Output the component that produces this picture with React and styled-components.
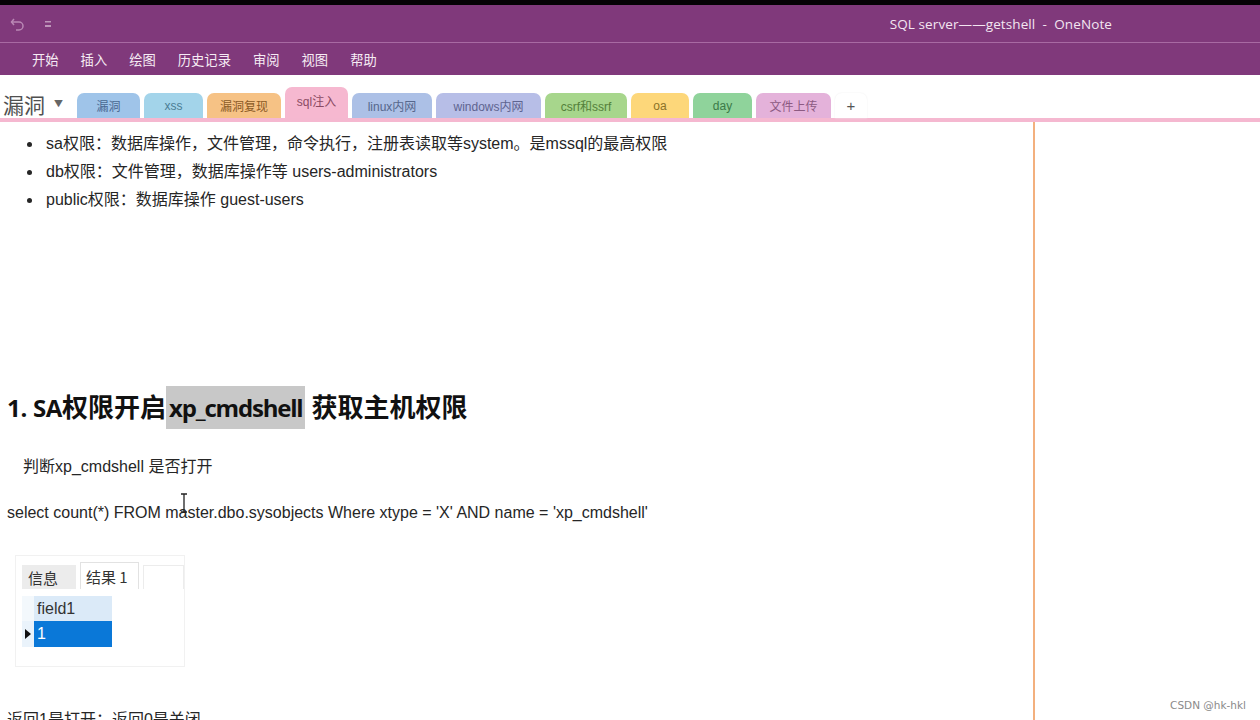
import React from 'react'
import styled, { createGlobalStyle } from 'styled-components'

const GlobalStyle = createGlobalStyle`
  html, body { margin: 0; padding: 0; background: #fff; }
  body { font-family: "Liberation Sans", "Noto Sans CJK SC", sans-serif; }
  #root { width: 1260px; height: 720px; overflow: hidden; }
`

const purple = '#80397b'

const Window = styled.div`
  width: 1260px;
  height: 720px;
  display: flex;
  flex-direction: column;
  overflow: hidden;
  position: relative;
  background: #fff;
`
const TopStrip = styled.div`
  flex-shrink: 0;
  height: 5px;
  background: #050205;
`
const TitleBar = styled.div`
  flex-shrink: 0;
  height: 37px;
  background: ${purple};
  display: flex;
  align-items: center;
  padding-left: 10px;
  box-sizing: border-box;
`
const QuickIcon = styled.span`
  display: flex;
  align-items: center;
  width: 16px;
  height: 16px;
  margin-right: 18px;
  opacity: 0.55;
`
const Title = styled.div`
  margin-left: auto;
  margin-right: 148px;
  color: #f3e6f1;
  font-family: "Open Sans", "Noto Sans CJK SC", sans-serif;
  font-size: 13.5px;
  letter-spacing: 0.1px;
`
const Ribbon = styled.div`
  flex-shrink: 0;
  height: 33px;
  background: ${purple};
  border-top: 1px solid #a86aa3;
  display: flex;
  align-items: center;
  gap: 22px;
  padding-left: 32px;
  box-sizing: border-box;
`
const RibbonItem = styled.span`
  color: #f6ecf4;
  font-family: "Noto Sans CJK SC", sans-serif;
  font-size: 13.3px;
`
const SectionBar = styled.div`
  flex-shrink: 0;
  height: 43px;
  display: flex;
  align-items: flex-end;
  padding-left: 3px;
  border-bottom: 4px solid #f5b8d0;
`
const NotebookName = styled.div`
  display: flex;
  align-items: center;
  align-self: center;
  margin-top: 14px;
  width: 74px;
  color: #505050;
  font-family: "Noto Sans CJK SC", sans-serif;
  font-size: 21px;
`
const Caret = styled.span`
  font-size: 9px;
  margin-left: 9px;
  color: #666;
`
const Tabs = styled.div`
  display: flex;
  align-items: flex-end;
  gap: 4px;
`
const Tab = styled.div`
  width: ${p => p.$w}px;
  height: ${p => (p.$active ? 31 : 25)}px;
  background: ${p => p.$bg};
  color: ${p => p.$fg};
  border-radius: 7px 7px 0 0;
  display: flex;
  align-items: center;
  justify-content: center;
  font-family: "Liberation Sans", "Noto Sans CJK SC", sans-serif;
  font-size: ${p => (p.$plus ? 15 : 12)}px;
  padding-bottom: ${p => (p.$active ? 4 : 0)}px;
  box-sizing: border-box;
  box-shadow: ${p => (p.$plus ? '0 0 2px #eee' : 'none')};
`
const Body = styled.div`
  flex: 1;
  min-height: 0;
  display: flex;
`
const Page = styled.div`
  width: 1033px;
  border-right: 2px solid #f3b07e;
  position: relative;
  color: #262626;
  font-size: 16px;
`
const Side = styled.div`
  flex: 1;
`
const BulletList = styled.ul`
  margin: 8px 0 0;
  padding-left: 46px;
  list-style: none;
`
const Bullet = styled.li`
  line-height: 28px;
  position: relative;
  &::before {
    content: '';
    position: absolute;
    left: -19px;
    top: 12px;
    width: 5px;
    height: 5px;
    border-radius: 50%;
    background: #262626;
  }
`
const Heading = styled.h1`
  margin: 170px 0 0 7px;
  font-size: 26px;
  line-height: 43px;
  font-weight: bold;
  color: #111;
  font-family: "Noto Sans CJK SC", sans-serif;
`
const Latin = styled.span`
  font-family: "Open Sans", sans-serif;
  font-size: 24px;
  letter-spacing: -0.3px;
`
const Highlight = styled(Latin)`
  background: #c8c8c8;
  display: inline-block;
  padding: 0 3px 0 3px;
  letter-spacing: -1.2px;
  margin-right: 6px;
`
const Para = styled.p`
  margin: ${p => p.$mt}px 0 0 ${p => p.$ml}px;
  line-height: 28px;
`
const ResultPanel = styled.div`
  margin: 28px 0 0 15px;
  width: 170px;
  height: 112px;
  border: 1px solid #f1f1f1;
  box-sizing: border-box;
  padding: 6px 0 0 6px;
  font-family: "Noto Sans CJK SC", sans-serif;
`
const PanelTabs = styled.div`
  display: flex;
  align-items: flex-end;
  gap: 4px;
  height: 27px;
`
const PanelTab = styled.div`
  height: ${p => (p.$on ? 27 : 24)}px;
  width: ${p => p.$w}px;
  background: ${p => (p.$on || p.$blank ? '#fff' : '#ececec')};
  border: 1px solid ${p => (p.$on ? '#e2e2e2' : '#ececec')};
  border-bottom: none;
  font-size: 15px;
  color: #333;
  display: flex;
  align-items: center;
  padding-left: 5px;
  box-sizing: border-box;
`
const Grid = styled.div`
  display: grid;
  grid-template-columns: 12px 78px;
  grid-template-rows: 25px 26px;
  margin-top: 7px;
  font-family: "Liberation Sans", sans-serif;
  font-size: 16px;
`
const RowHead = styled.div`
  display: flex;
  align-items: center;
  justify-content: center;
  background: ${p => (p.$light ? '#f3f8fc' : '#eaf3fb')};
`
const Cell = styled.div`
  display: flex;
  align-items: center;
  padding-left: 3px;
  background: ${p => (p.$sel ? '#0a78d8' : '#dbeaf8')};
  color: ${p => (p.$sel ? '#fff' : '#333')};
`
const Watermark = styled.div`
  position: absolute;
  right: 14px;
  bottom: 9px;
  font-family: "DejaVu Sans", sans-serif;
  font-size: 10.5px;
  color: #8a8a8a;
`
const Cursor = styled.svg`
  position: absolute;
  left: 180px;
  top: 371px;
`

const ribbon = ['开始', '插入', '绘图', '历史记录', '审阅', '视图', '帮助']

const tabs = [
  { label: '漏洞', bg: '#9fc4e9', fg: '#4a6891', w: 63 },
  { label: 'xss', bg: '#a3d4ea', fg: '#4b7d94', w: 59 },
  { label: '漏洞复现', bg: '#f6c285', fg: '#8a5a25', w: 74 },
  { label: 'sql注入', bg: '#f6b8d0', fg: '#8a4a63', w: 63, active: true },
  { label: 'linux内网', bg: '#acc0e6', fg: '#56678c', w: 80 },
  { label: 'windows内网', bg: '#b7bee7', fg: '#5e6490', w: 105 },
  { label: 'csrf和ssrf', bg: '#a7d68c', fg: '#54803a', w: 82 },
  { label: 'oa', bg: '#fdd77a', fg: '#8b7228', w: 58 },
  { label: 'day', bg: '#8fd39b', fg: '#3c7a48', w: 59 },
  { label: '文件上传', bg: '#e4b2da', fg: '#8c5a82', w: 75 },
]

const App = () => {
  return (
    <Window>
      <GlobalStyle />
      <TopStrip />
      <TitleBar>
        <QuickIcon>
          <svg width="15" height="14" viewBox="0 0 15 14" fill="none" stroke="#e9c9e5" strokeWidth="1.5">
            <path d="M4 2 L1.5 5 L4 8" />
            <path d="M1.5 5 H9 a4 4 0 0 1 0 8 H6" />
          </svg>
        </QuickIcon>
        <QuickIcon>
          <svg width="8" height="10" viewBox="0 0 8 10" fill="#f2e2ef">
            <rect x="1" y="2" width="6" height="1.5" />
            <rect x="1" y="6" width="6" height="2" />
          </svg>
        </QuickIcon>
        <Title>SQL server——getshell&nbsp; -&nbsp; OneNote</Title>
      </TitleBar>
      <Ribbon>
        {ribbon.map(r => (
          <RibbonItem key={r}>{r}</RibbonItem>
        ))}
      </Ribbon>
      <SectionBar>
        <NotebookName>
          漏洞<Caret>▼</Caret>
        </NotebookName>
        <Tabs>
          {tabs.map(t => (
            <Tab key={t.label} $w={t.w} $bg={t.bg} $fg={t.fg} $active={t.active}>
              {t.label}
            </Tab>
          ))}
          <Tab $w={32} $bg="#fff" $fg="#555" $plus>
            +
          </Tab>
        </Tabs>
      </SectionBar>
      <Body>
        <Page>
          <BulletList>
            <Bullet>sa权限：数据库操作，文件管理，命令执行，注册表读取等system。是mssql的最高权限</Bullet>
            <Bullet>db权限：文件管理，数据库操作等 users-administrators</Bullet>
            <Bullet>public权限：数据库操作 guest-users</Bullet>
          </BulletList>
          <Heading>
            <Latin>1. SA</Latin>权限开启<Highlight>xp_cmdshell</Highlight>获取主机权限
          </Heading>
          <Para $mt={24} $ml={23}>判断xp_cmdshell 是否打开</Para>
          <Para $mt={18} $ml={7}>
            select count(*) FROM master.dbo.sysobjects Where xtype = 'X' AND name = 'xp_cmdshell'
          </Para>
          <ResultPanel>
            <PanelTabs>
              <PanelTab $w={55}>信息</PanelTab>
              <PanelTab $w={60} $on>结果 1</PanelTab>
              <PanelTab $w={42} $blank />
            </PanelTabs>
            <Grid>
              <RowHead $light />
              <Cell>field1</Cell>
              <RowHead>
                <svg width="6" height="10" viewBox="0 0 6 10">
                  <path d="M0 0 L6 5 L0 10 Z" fill="#111" />
                </svg>
              </RowHead>
              <Cell $sel>1</Cell>
            </Grid>
          </ResultPanel>
          <Para $mt={39} $ml={7}>返回1是打开；返回0是关闭</Para>
          <Cursor width="8" height="20" viewBox="0 0 8 20">
            <path d="M1 1 H7 M4 1 V19 M1 19 H7" stroke="#222" strokeWidth="1.3" fill="none" />
          </Cursor>
        </Page>
        <Side />
      </Body>
      <Watermark>CSDN @hk-hkl</Watermark>
    </Window>
  )
}

export default App
